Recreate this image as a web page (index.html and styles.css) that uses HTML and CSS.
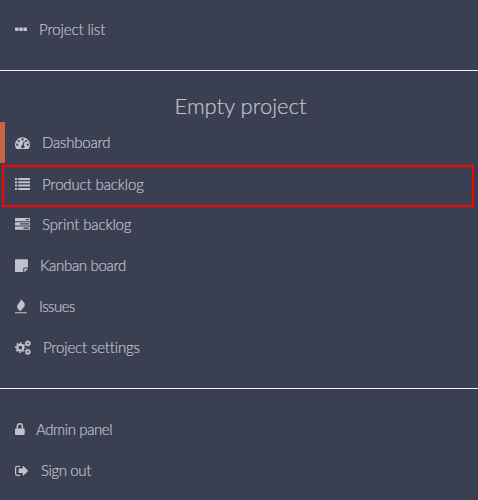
FILE: index.html
```
<!DOCTYPE html>
<html lang="en">
<head>
<meta charset="utf-8">
<title>Empty project</title>
<link rel="stylesheet" href="styles.css">
</head>
<body>
<nav class="sidebar">
  <div class="group top">
    <a class="item"><svg width="12" height="15" viewBox="0 0 12 15"><path d="M.8 5.500h2q.8 0 .8.800v2q0 .8-.8.800h-2Q0 9.100 0 8.300v-2q0-.8.8-.8zM5 5.500h2q.8 0 .8.800v2q0 .8-.8.800H5q-.8 0-.8-.8v-2q0-.8.8-.8zM9.200 5.500h2q.8 0 .8.800v2q0 .8-.8.800h-2q-.8 0-.8-.8v-2q0-.8.8-.8z"/></svg><span class="label project-list">Project list</span></a>
  </div>
  <div class="group project">
    <h1>Empty project</h1>
    <a class="item active"><svg width="15" height="15" viewBox="0 0 15 15"><path fill-rule="evenodd" d="M7.500 2.300A7.500 7.500 0 0 0 0 9.800c0 1.400.4 2.700 1.100 3.800.2.300.3.400.6.400h11.600c.3 0 .4-.1.600-.4.700-1.100 1.100-2.400 1.100-3.800a7.500 7.500 0 0 0-7.500-7.500zM2.200 8.600a1.100 1.100 0 1 1 0 2.200 1.100 1.100 0 0 1 0-2.200zM3.800 4.900a1.100 1.100 0 1 1 0 2.200 1.100 1.100 0 0 1 0-2.200zM7.500 3.300a1.100 1.100 0 1 1 0 2.200 1.100 1.100 0 0 1 0-2.200zM11.200 4.900a1.100 1.100 0 1 1 0 2.200 1.100 1.100 0 0 1 0-2.200zM12.800 8.600a1.100 1.100 0 1 1 0 2.200 1.100 1.100 0 0 1 0-2.200zM9.300 6.300c.3.100.4.400.3.700l-.8 3.200a1.650 1.650 0 1 1-1.200-.3l.9-3.200c.1-.3.400-.5.800-.4z"/></svg><span class="label dashboard">Dashboard</span></a>
    <a class="item highlighted"><svg width="15" height="15" viewBox="0 0 15 15"><path d="M0 1h2.200v2H0zM3.200 1H15v2H3.200zM0 4.300h2.200v2H0zM3.200 4.300H15v2H3.200zM0 7.600h2.200v2H0zM3.200 7.600H15v2H3.200zM0 10.900h2.200v2H0zM3.200 10.900H15v2H3.200z"/></svg><span class="label product">Product backlog</span></a>
    <a class="item"><svg width="15" height="15" viewBox="0 0 15 15"><path fill-rule="evenodd" d="M.5 1h14q.5 0 .5.500v2.200q0 .5-.5.500H.5Q0 4.200 0 3.700V1.500Q0 1 .5 1zM10.800 2.100v1H14v-1zM.5 5.200h14q.5 0 .5.500v2.300q0 .5-.5.500H.5Q0 8.500 0 8V5.700q0-.5.500-.5zM5.300 6.300v1.100H14V6.300zM.5 9.500h14q.5 0 .5.500v2.300q0 .5-.5.500H.5q-.5 0-.5-.5V10q0-.5.500-.5zM8.500 10.600v1.100H14v-1.100z"/></svg><span class="label sprint">Sprint backlog</span></a>
    <a class="item"><svg width="13" height="15" viewBox="0 0 13 15"><path d="M.7 1.200h11.500q.7 0 .7.700v7.500H9.200q-.9 0-.9.900V14H.7Q0 14 0 13.300V1.900q0-.7.700-.7zM9.300 10.400h3.500c-.1.500-.3.900-.6 1.200l-1.700 1.700c-.3.300-.7.500-1.200.6z"/></svg><span class="label kanban">Kanban board</span></a>
    <a class="item"><svg width="12" height="15" viewBox="0 0 12 15"><path d="M5.700-.5c.2 2 4.300 2.900 4.100 6.200-.1 2.800-3 3.800-3.900 6.500C4 11.700 1.800 9.600 2.200 7.200 2.600 4.300 6.300 3.200 5.700-.5zM0 13.300h11.800v1H0z"/></svg><span class="label issues">Issues</span></a>
    <a class="item"><svg width="16" height="15" viewBox="0 0 16 15"><g fill="none" stroke="currentColor"><circle cx="5.300" cy="7.600" r="3.050" stroke-width="2.300"/><circle cx="5.300" cy="7.600" r="4.700" stroke-width="1.200" stroke-dasharray="1.850 1.840" stroke-dashoffset=".92"/><circle cx="12.800" cy="3.400" r="1.750" stroke-width="1.600"/><circle cx="12.800" cy="3.400" r="2.700" stroke-width=".9" stroke-dasharray="1.410 1.410"/><circle cx="12.800" cy="11.900" r="1.750" stroke-width="1.600"/><circle cx="12.800" cy="11.900" r="2.700" stroke-width=".9" stroke-dasharray="1.410 1.410"/></g></svg><span class="label settings">Project settings</span></a>
  </div>
  <div class="group account">
    <a class="item lock"><svg width="10" height="15" viewBox="0 0 10 15"><path fill-rule="evenodd" d="M.8 6.500h.8V4.400a3.250 3.400 0 0 1 6.500 0v2.100h.8q.8 0 .8.800v4.800q0 .8-.8.800H.8q-.8 0-.8-.8V7.300q0-.8.8-.8zM3.100 6.500h3.500V4.400a1.750 1.900 0 0 0-3.500 0z"/></svg><span class="label admin">Admin panel</span></a>
    <a class="item"><svg width="14" height="15" viewBox="0 0 14 15"><path d="M4.600 3.300H2.400Q.6 3.300.6 5v5.700q0 1.700 1.800 1.700h2.200" fill="none" stroke="currentColor" stroke-width="1.200" stroke-linecap="round"/><path d="M4.200 5.500h3.500V3.400q0-.9.700-.3l4.500 4.300q.4.400 0 .8l-4.500 4.300q-.7.600-.7-.3v-2.100H4.200q-.6 0-.6-.6V6.100q0-.6.600-.6z"/></svg><span class="label signout">Sign out</span></a>
  </div>
</nav>
</body>
</html>
```
FILE: styles.css
```
* { box-sizing: border-box; }
body {
  margin: 0;
  background: #3a3f51;
  color: #c1c2cb;
  font-family: Lato, "Liberation Sans", sans-serif;
  font-size: 15px;
  font-weight: 300;
  font-variant-ligatures: none;
  -webkit-text-stroke: .2px currentColor;
}
.sidebar { height: 500px; overflow: hidden; }
.group { border-bottom: 1px solid #eeeeef; }
.top { height: 71px; padding-top: 9px; }
.project { height: 318px; padding-top: 19px; }
.account { padding-top: 20px; border-bottom: 0; }
h1 {
  margin: 0 0 2px;
  padding-left: 3px;
  height: 30px;
  font-size: 22px;
  line-height: 32px;
  font-weight: 300;
  text-align: center;
}
.item {
  display: flex;
  align-items: center;
  gap: 12px;
  height: 41px;
  padding-left: 15px;
}
.item svg { flex: none; fill: currentColor; }
.label { line-height: 20px; padding-bottom: 1px; white-space: nowrap; }
.active { border-left: 5px solid #cb6545; padding-left: 10px; }
.highlighted {
  height: 42px;
  margin: 2px 4px -3px 2px;
  padding: 0 0 4px 11px;
  border: 2px solid #f00;
}
.lock { gap: 11px; }
.project-list { letter-spacing: -.1px; }
.dashboard { letter-spacing: -.2px; }
.product, .sprint { letter-spacing: -.13px; }
.kanban { letter-spacing: -.33px; }
.issues { letter-spacing: -.5px; }
.settings { letter-spacing: -.16px; }
.admin { letter-spacing: -.4px; }
.signout { letter-spacing: -.38px; }
```
